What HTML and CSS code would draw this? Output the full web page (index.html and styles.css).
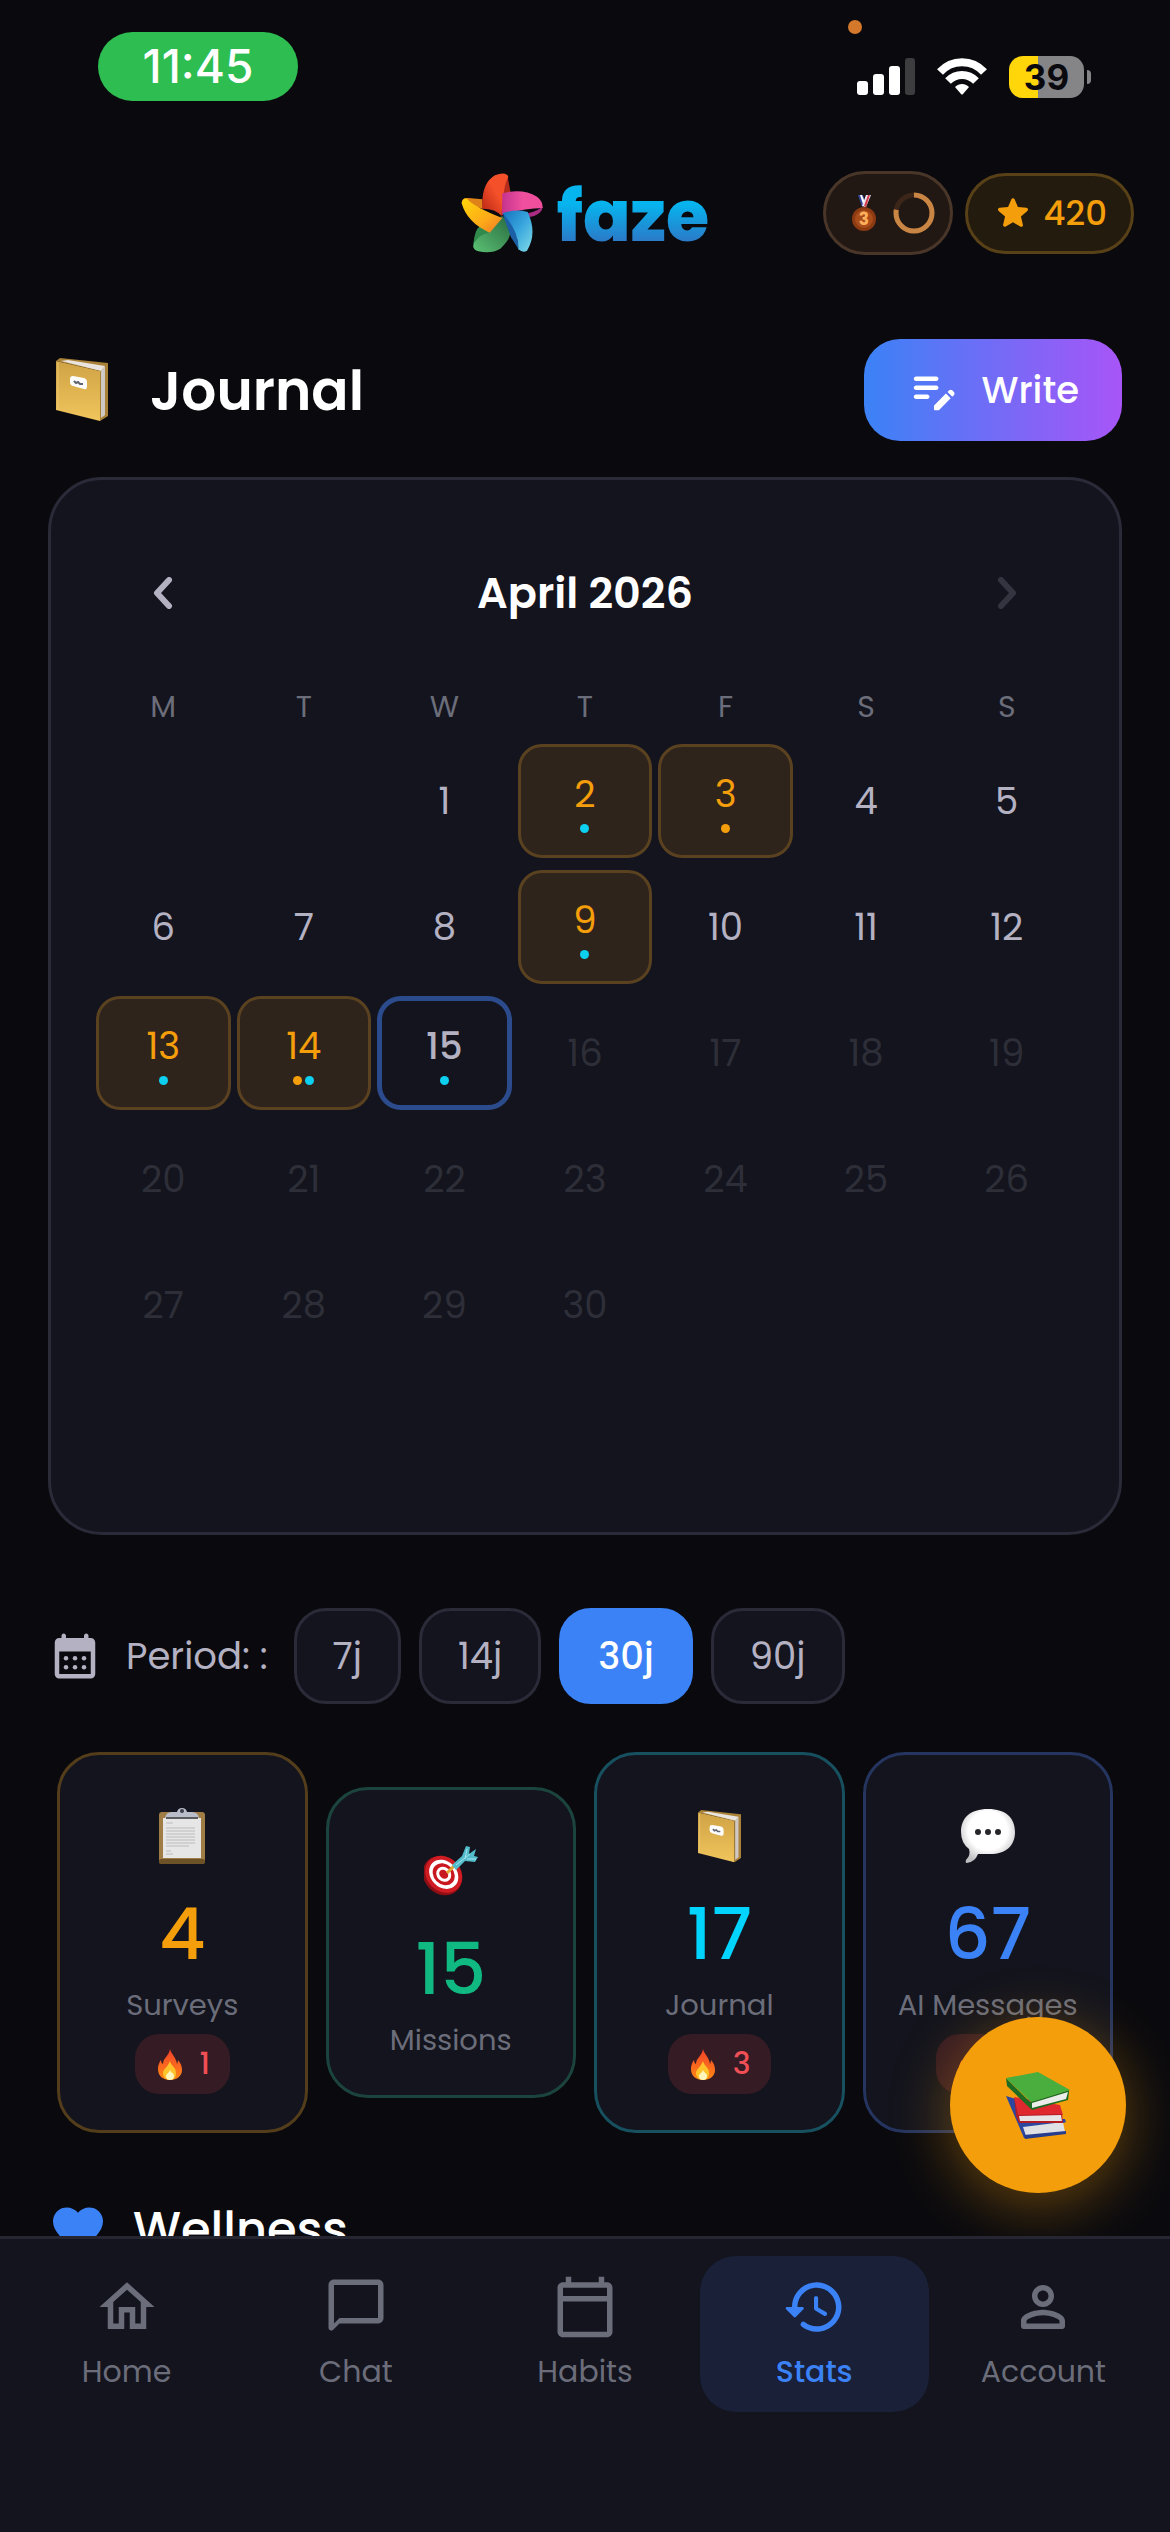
FILE: index.html
```html
<!DOCTYPE html>
<html lang="en">
<head>
    <meta charset="UTF-8">
    <meta name="viewport" content="width=device-width, initial-scale=1.0">
    <title>Faze - Stats</title>
    <link rel="stylesheet" href="styles.css">
</head>
<body>
<!-- shared emoji-style icons -->
<svg class="defs" aria-hidden="true">
    <defs>
        <linearGradient id="gold" x1="0" y1="0" x2="0" y2="1">
            <stop offset="0" stop-color="#cfa245"/>
            <stop offset="1" stop-color="#f0c55c"/>
        </linearGradient>
        <linearGradient id="flame" x1="0" y1="0" x2="0" y2="1">
            <stop offset="0" stop-color="#f2402a"/>
            <stop offset="1" stop-color="#ff8a14"/>
        </linearGradient>
        <symbol id="notebook" viewBox="0 0 52 64">
            <path d="M0 3 L4 0 L52 5 L52 58 L44 63 L44 13 Z" fill="#a98238"/>
            <path d="M5 3 L12 2 L49 8 L45 13 Z" fill="#e9e4dd"/>
            <path d="M45 13 L49 8 L49 57 L45 60 Z" fill="#cfc9c6"/>
            <path d="M0 3 L44 13 L44 63 L0 52 Z" fill="url(#gold)"/>
            <path d="M2 4 L2 52" stroke="#e9c873" stroke-width="1"/>
            <path d="M17 18 L28 20 Q31 21 31 24 L31 28 Q31 32 28 31 L17 28 Q14 27 14 24 L14 21 Q14 18 17 18 Z" fill="#fdfdfd"/>
            <path d="M18 23 L20 25 L22 24 L24 26 L27 26" stroke="#60646e" stroke-width="2" fill="none"/>
        </symbol>
        <symbol id="fire" viewBox="0 0 24 31">
            <path d="M12 0 C13 5 18 8 19 15 Q20 13 20 11 C23 14 24 18 24 21 C24 27 19 31 12 31 C5 31 0 27 0 20 C0 16 2 12 3 11 Q3 14 5 15 C5 9 11 7 12 0 Z" fill="url(#flame)"/>
            <path d="M12 12 C13 17 18 18 18 24 C18 28 16 31 12 31 C8 31 5 28 5 24 C5 20 10 18 12 12 Z" fill="#ffc32b"/>
            <path d="M12 21 C13 24 16 24 16 27 C16 30 14 31 12 31 C10 31 8 30 8 27 C8 25 11 24 12 21 Z" fill="#fff6bd"/>
        </symbol>
    </defs>
</svg>

<div class="app">
    <div class="status-bar">
        <span class="status-time">11:45</span>
        <span class="mic-dot"></span>
        <div class="status-icons">
            <svg width="58" height="38" viewBox="0 0 58 38" aria-hidden="true">
                <g fill="#fff">
                    <rect x="0" y="23" width="11" height="14" rx="3"/>
                    <rect x="16" y="16" width="11" height="21" rx="3"/>
                    <rect x="32" y="8" width="11" height="29" rx="3"/>
                </g>
                <rect x="48" y="0" width="10" height="37" rx="3" fill="#3d3d40"/>
            </svg>
            <svg width="50" height="38" viewBox="0 0 50 38" aria-hidden="true">
                <g fill="none" stroke="#fff" stroke-width="8">
                    <path d="M3 14 C15 1 35 1 47 14"/>
                    <path d="M11 23 C19 15 31 15 39 23"/>
                </g>
                <path d="M18 29 C22 25 28 25 32 29 L26 36 Q25 37 24 36 Z" fill="#fff"/>
            </svg>
            <span class="battery">39</span>
        </div>
    </div>

    <header class="top-bar">
        <a class="logo" href="#">
            <svg class="logo-mark" viewBox="66 70 246 238" aria-hidden="true">
                <defs>
                    <linearGradient id="red" x1="0" y1="1" x2="1" y2="0">
                        <stop offset="0" stop-color="#b52413"/>
                        <stop offset=".55" stop-color="#f4502a"/>
                    </linearGradient>
                    <linearGradient id="pink" x1="0" y1="0" x2="1" y2="0">
                        <stop offset="0" stop-color="#c4338f"/>
                        <stop offset=".5" stop-color="#ef4f9d"/>
                    </linearGradient>
                    <linearGradient id="sky" x1="0" y1="0" x2="1" y2="1">
                        <stop offset="0" stop-color="#1573bd"/>
                        <stop offset=".5" stop-color="#38a5de"/>
                        <stop offset="1" stop-color="#82dce8"/>
                    </linearGradient>
                    <linearGradient id="leaf" x1="1" y1="0" x2="0" y2="1">
                        <stop offset="0" stop-color="#28693f"/>
                        <stop offset="1" stop-color="#5cc274"/>
                    </linearGradient>
                    <linearGradient id="sun" x1="0" y1="0" x2="1" y2="1">
                        <stop offset="0" stop-color="#ffd60a"/>
                        <stop offset=".6" stop-color="#fdaa18"/>
                        <stop offset="1" stop-color="#f0762a"/>
                    </linearGradient>
                </defs>
                <path d="M190 198 L216 226 Q222 262 184 296 Q158 312 118 304 Q100 298 103 285 Q112 240 120 232 Z" fill="url(#leaf)"/>
                <path d="M103 282 Q108 236 122 230 L152 248 Q122 250 103 282 Z" fill="#2f8a4b"/>
                <path d="M68 160 Q68 142 88 144 L130 148 L132 176 Z" fill="#e0821a"/>
                <path d="M190 204 L152 248 Q84 218 68 160 Q70 144 84 146 Q104 170 190 204 Z" fill="url(#sun)"/>
                <path d="M190 196 L188 140 L205 74 L214 124 L192 196 Z" fill="#b62c1b"/>
                <path d="M188 198 Q170 176 130 176 Q126 100 168 76 Q200 64 208 80 Q192 106 188 198 Z" fill="url(#red)"/>
                <path d="M218 188 Q270 200 311 170 Q310 182 302 188 Q284 202 270 200 Z" fill="#a82c83"/>
                <path d="M189 194 L190 130 Q250 114 294 140 Q312 154 311 174 Q250 176 189 194 Z" fill="url(#pink)"/>
                <path d="M192 196 L216 262 L240 300 Q232 240 226 196 Z" fill="#1c5fa5"/>
                <path d="M190 190 Q230 176 266 186 Q296 250 264 302 Q252 310 238 298 Q240 240 190 190 Z" fill="url(#sky)"/>
            </svg>
            <span class="logo-name">faze</span>
        </a>
        <div class="badges">
            <button class="badge badge-rank" aria-label="Rank">
                <svg width="24" height="38" viewBox="0 0 24 38" aria-hidden="true">
                    <path d="M6 1 L11 1 L14 10 L10 13 Z" fill="#35489c"/>
                    <path d="M8 1 L10 1 L14 11 L12 13 Z" fill="#fff"/>
                    <path d="M19 1 L14 1 L10 12 L14 13 Z" fill="#e9e6f2"/>
                    <path d="M18 1 L16 1 L12 12 L14 13 Z" fill="#d63a4c"/>
                    <circle cx="12" cy="25" r="12" fill="#8b3a12"/>
                    <circle cx="12" cy="25" r="9" fill="#a84c19"/>
                    <text class="medal-num" x="12" y="31">3</text>
                </svg>
                <svg width="42" height="42" viewBox="0 0 42 42" aria-hidden="true">
                    <circle cx="21" cy="21" r="18" fill="none" stroke="#3b2619" stroke-width="5"/>
                    <circle cx="21" cy="21" r="18" fill="none" stroke="#c98544" stroke-width="5" pathLength="100" stroke-dasharray="78 22" transform="rotate(-90 21 21)"/>
                </svg>
            </button>
            <button class="badge badge-points">
                <svg width="42" height="42" viewBox="0 0 24 24" fill="currentColor" aria-hidden="true"><path d="M12 17.27l4.15 2.51c.76.46 1.69-.22 1.49-1.08l-1.1-4.72 3.67-3.18c.67-.58.31-1.68-.57-1.75l-4.83-.41-1.89-4.46c-.34-.81-1.5-.81-1.84 0L9.19 8.63l-4.83.41c-.88.07-1.24 1.17-.57 1.75l3.67 3.18-1.1 4.72c-.2.86.73 1.54 1.49 1.08l4.15-2.5z"/></svg>
                420
            </button>
        </div>
    </header>

    <div class="content">
        <main class="scroll">
            <div class="page-head">
                <svg class="page-icon" aria-hidden="true"><use href="#notebook"/></svg>
                <h1>Journal</h1>
                <button class="write-btn">
                    <svg width="54" height="54" viewBox="0 0 24 24" fill="currentColor" aria-hidden="true"><path d="M14 11c0 .55-.45 1-1 1H4c-.55 0-1-.45-1-1s.45-1 1-1h9c.55 0 1 .45 1 1zM3 7c0 .55.45 1 1 1h9c.55 0 1-.45 1-1s-.45-1-1-1H4c-.55 0-1 .45-1 1zm7 8c0-.55-.45-1-1-1H4c-.55 0-1 .45-1 1s.45 1 1 1h5c.55 0 1-.45 1-1zm8.01-2.13.71-.71c.39-.39 1.02-.39 1.41 0l.71.71c.39.39.39 1.02 0 1.41l-.71.71-2.12-2.12zm-.71.71-5.16 5.16c-.09.09-.14.21-.14.35v1.41c0 .28.22.5.5.5h1.41c.13 0 .26-.05.35-.15l5.16-5.16-2.12-2.11z"/></svg>
                    Write
                </button>
            </div>

            <section class="calendar">
                <div class="calendar-head">
                    <button class="month-btn" aria-label="Previous month">
                        <svg width="20" height="32" viewBox="0 0 20 32" aria-hidden="true"><path d="M16 3 L4 16 L16 29"/></svg>
                    </button>
                    <h2>April 2026</h2>
                    <button class="month-btn" aria-label="Next month" disabled>
                        <svg width="20" height="32" viewBox="0 0 20 32" aria-hidden="true"><path d="M4 3 L16 16 L4 29"/></svg>
                    </button>
                </div>
                <table class="days">
                    <thead>
                    <tr><th>M</th><th>T</th><th>W</th><th>T</th><th>F</th><th>S</th><th>S</th></tr>
                    </thead>
                    <tbody>
                    <tr>
                        <td></td>
                        <td></td>
                        <td><button class="day">1</button></td>
                        <td><button class="day filled">2<span class="dots"><i class="dot cyan"></i></span></button></td>
                        <td><button class="day filled">3<span class="dots"><i class="dot orange"></i></span></button></td>
                        <td><button class="day">4</button></td>
                        <td><button class="day">5</button></td>
                    </tr>
                    <tr>
                        <td><button class="day">6</button></td>
                        <td><button class="day">7</button></td>
                        <td><button class="day">8</button></td>
                        <td><button class="day filled">9<span class="dots"><i class="dot cyan"></i></span></button></td>
                        <td><button class="day">10</button></td>
                        <td><button class="day">11</button></td>
                        <td><button class="day">12</button></td>
                    </tr>
                    <tr>
                        <td><button class="day filled">13<span class="dots"><i class="dot cyan"></i></span></button></td>
                        <td><button class="day filled">14<span class="dots"><i class="dot orange"></i><i class="dot cyan"></i></span></button></td>
                        <td><button class="day today">15<span class="dots"><i class="dot cyan"></i></span></button></td>
                        <td><button class="day" disabled>16</button></td>
                        <td><button class="day" disabled>17</button></td>
                        <td><button class="day" disabled>18</button></td>
                        <td><button class="day" disabled>19</button></td>
                    </tr>
                    <tr>
                        <td><button class="day" disabled>20</button></td>
                        <td><button class="day" disabled>21</button></td>
                        <td><button class="day" disabled>22</button></td>
                        <td><button class="day" disabled>23</button></td>
                        <td><button class="day" disabled>24</button></td>
                        <td><button class="day" disabled>25</button></td>
                        <td><button class="day" disabled>26</button></td>
                    </tr>
                    <tr>
                        <td><button class="day" disabled>27</button></td>
                        <td><button class="day" disabled>28</button></td>
                        <td><button class="day" disabled>29</button></td>
                        <td><button class="day" disabled>30</button></td>
                        <td></td>
                        <td></td>
                        <td></td>
                    </tr>
                    <tr><td colspan="7"></td></tr>
                    </tbody>
                </table>
            </section>

            <div class="period" role="group" aria-labelledby="periodLabel">
                <svg width="54" height="54" viewBox="0 0 24 24" fill="currentColor" aria-hidden="true">
                    <path fill-rule="evenodd" d="M7 2c.55 0 1 .45 1 1v1h8V3c0-.55.45-1 1-1s1 .45 1 1v1h1c1.1 0 2 .9 2 2v14c0 1.1-.9 2-2 2H5c-1.1 0-2-.9-2-2V6c0-1.1.9-2 2-2h1V3c0-.55.45-1 1-1zM5 10v10h14V10z"/>
                    <circle cx="8" cy="13" r="1"/><circle cx="12" cy="13" r="1"/><circle cx="16" cy="13" r="1"/>
                    <circle cx="8" cy="17" r="1"/><circle cx="12" cy="17" r="1"/><circle cx="16" cy="17" r="1"/>
                </svg>
                <span id="periodLabel" class="period-label">Period: :</span>
                <div class="period-options">
                    <button class="chip">7j</button>
                    <button class="chip">14j</button>
                    <button class="chip active" aria-pressed="true">30j</button>
                    <button class="chip">90j</button>
                </div>
            </div>

            <section class="stats">
                <div class="stat stat-orange">
                    <div class="stat-icon">
                        <svg width="46" height="56" viewBox="0 0 46 56" aria-hidden="true">
                            <rect x="0" y="4" width="46" height="52" rx="3" fill="#a07d45"/>
                            <rect x="0" y="51" width="46" height="5" rx="2" fill="#6d5127"/>
                            <path d="M4 10 H42 V50 H4 Z" fill="#e6e6e6"/>
                            <path d="M6 10 Q7 4 13 4 L18 4 Q19 0 23 0 Q27 0 28 4 L33 4 Q39 4 40 10 Z" fill="#b9bcc9"/>
                            <circle cx="23" cy="3" r="2" fill="#3c3d4a"/>
                            <path d="M7 10 H39" stroke="#5d5d60" stroke-width="2"/>
                            <path d="M7 15 H14 M7 20 H36 M7 23 H36 M7 26 H36 M7 29 H36 M7 32 H36 M7 35 H36 M7 38 H30 M7 43 H12 M7 46 H14" stroke="#bcbcbe" stroke-width="1"/>
                        </svg>
                    </div>
                    <div class="stat-value">4</div>
                    <div class="stat-label">Surveys</div>
                    <div class="streak"><svg aria-hidden="true"><use href="#fire"/></svg>1</div>
                </div>
                <div class="stat stat-green">
                    <div class="stat-icon">
                        <svg width="54" height="50" viewBox="0 0 54 50" aria-hidden="true">
                            <g transform="rotate(45 19 29)">
                                <ellipse cx="19" cy="30" rx="21" ry="18" fill="#8f0d14"/>
                                <ellipse cx="19" cy="28" rx="20" ry="17" fill="#cf1c22"/>
                                <ellipse cx="19" cy="28" rx="16" ry="13" fill="#fff"/>
                                <ellipse cx="19" cy="28" rx="12" ry="10" fill="#c9181f"/>
                                <ellipse cx="19" cy="28" rx="8" ry="7" fill="#fff"/>
                                <ellipse cx="19" cy="28" rx="5" ry="4" fill="#c9181f"/>
                            </g>
                            <path d="M23 27 L30 20" stroke="#e2a533" stroke-width="3"/>
                            <path d="M28 19 L38 10 L42 0 L46 1 L45 8 L52 3 L50 10 L54 11 L51 16 L41 15 L32 24 Z" fill="#52bccb"/>
                            <path d="M32 19 L46 8 M41 13 L43 3 M43 13 L52 13" stroke="#a5e6ee" stroke-width="1"/>
                        </svg>
                    </div>
                    <div class="stat-value">15</div>
                    <div class="stat-label">Missions</div>
                </div>
                <div class="stat stat-cyan">
                    <div class="stat-icon">
                        <svg width="43" height="53" aria-hidden="true"><use href="#notebook"/></svg>
                    </div>
                    <div class="stat-value">17</div>
                    <div class="stat-label">Journal</div>
                    <div class="streak"><svg aria-hidden="true"><use href="#fire"/></svg>3</div>
                </div>
                <div class="stat stat-blue">
                    <div class="stat-icon">
                        <svg width="54" height="54" viewBox="0 0 54 54" aria-hidden="true">
                            <defs>
                                <radialGradient id="bubble" cx=".5" cy=".4" r=".6">
                                    <stop offset=".6" stop-color="#fff"/>
                                    <stop offset="1" stop-color="#bfbfc2"/>
                                </radialGradient>
                            </defs>
                            <path d="M27 0 C45 0 54 9 54 23 C54 37 45 45 29 45 Q20 45 17 45 Q14 53 6 54 Q4 54 5 51 Q10 46 8 40 Q0 34 0 23 C0 9 9 0 27 0 Z" fill="url(#bubble)"/>
                            <g fill="#26262b"><circle cx="17" cy="23" r="3"/><circle cx="27" cy="23" r="3"/><circle cx="37" cy="23" r="3"/></g>
                        </svg>
                    </div>
                    <div class="stat-value">67</div>
                    <div class="stat-label">AI Messages</div>
                    <div class="streak"><svg aria-hidden="true"><use href="#fire"/></svg>3</div>
                </div>
            </section>

            <h2 class="section-title">
                <svg width="60" height="60" viewBox="0 0 24 24" aria-hidden="true"><path fill="#3b82f6" d="M13.35 20.13c-.76.69-1.93.69-2.69-.01l-.11-.1C5.3 15.27 1.87 12.16 2 8.28c.06-1.7.93-3.33 2.34-4.29 2.64-1.8 5.9-.96 7.66 1.1 1.76-2.06 5.02-2.91 7.66-1.1 1.41.96 2.28 2.59 2.34 4.29.14 3.88-3.3 6.99-8.55 11.76l-.1.09z"/></svg>
                Wellness
            </h2>
        </main>

        <button class="fab" aria-label="Library">
            <svg width="64" height="67" viewBox="0 0 64 67" aria-hidden="true">
                <path d="M0 24 L10 27 L14 47 L59 47 L60 50 L20 66 L18 66 Z" fill="#2b479f"/>
                <path d="M17 55 L57 50 L59 60 L20 64 Z" fill="#dfe0e3"/>
                <path d="M18 63 L60 59 L60 62 L19 67 Z" fill="#253d8c"/>
                <path d="M8 25 L54 33 L57 43 L12 44 Z" fill="#e0292f"/>
                <path d="M8 25 L12 43 L56 42 L57 51 L13 51 L10 44 Z" fill="#b31c24"/>
                <path d="M13 44 L55 43 L56 49 L14 49 Z" fill="#e8e5e6"/>
                <path d="M0 6 L24 30 L63 18 L63 20 L62 28 L26 38 L1 14 Z" fill="#1e6b22"/>
                <path d="M26 31 L62 20 L60 27 L26 36 Z" fill="#ececea"/>
                <path d="M0 6 L32 0 L64 18 L25 30 Z" fill="#4aae3f"/>
            </svg>
        </button>
    </div>

    <nav class="tab-bar">
        <a class="tab" href="#">
            <svg viewBox="0 0 24 24" aria-hidden="true"><path d="M12 5.69l5 4.5V18h-2v-6H9v6H7v-7.81l5-4.5M12 3L2 12h3v8h6v-6h2v6h6v-8h3L12 3z"/></svg>
            Home
        </a>
        <a class="tab" href="#">
            <svg viewBox="0 0 24 24" aria-hidden="true"><path d="M20 2H4c-1.1 0-2 .9-2 2v15.59c0 .89 1.08 1.34 1.71.71L6 18h14c1.1 0 2-.9 2-2V4c0-1.1-.9-2-2-2zm0 14H6l-2 2V4h16v12z"/></svg>
            Chat
        </a>
        <a class="tab" href="#">
            <svg viewBox="0 0 24 24" aria-hidden="true"><path d="M20 3h-1V1h-2v2H7V1H5v2H4c-1.1 0-2 .9-2 2v16c0 1.1.9 2 2 2h16c1.1 0 2-.9 2-2V5c0-1.1-.9-2-2-2zm0 18H4V10h16v11zm0-13H4V5h16v3z"/></svg>
            Habits
        </a>
        <a class="tab active" href="#" aria-current="page">
            <svg viewBox="0 0 24 24" aria-hidden="true"><path d="M13.26 3C8.17 2.86 4 6.95 4 12H2.21c-.45 0-.67.54-.35.85l2.79 2.8c.2.2.51.2.71 0l2.79-2.8c.31-.31.09-.85-.36-.85H6c0-3.9 3.18-7.05 7.1-7 3.72.05 6.85 3.18 6.9 6.9.05 3.91-3.1 7.1-7 7.1-1.61 0-3.1-.55-4.28-1.48-.4-.31-.96-.28-1.32.08-.42.43-.39 1.13.08 1.49C9 20.29 10.91 21 13 21c5.05 0 9.14-4.17 9-9.26-.13-4.69-4.05-8.61-8.74-8.74zm-.51 5c-.41 0-.75.34-.75.75v3.68c0 .35.19.68.49.86l3.12 1.85c.36.21.82.09 1.03-.26.21-.36.09-.82-.26-1.03l-2.88-1.71v-3.4c0-.4-.34-.74-.75-.74z"/></svg>
            Stats
        </a>
        <a class="tab" href="#">
            <svg viewBox="0 0 24 24" aria-hidden="true"><path d="M12 6c1.1 0 2 .9 2 2s-.9 2-2 2-2-.9-2-2 .9-2 2-2m0 9c2.7 0 5.8 1.29 6 2v1H6v-.99c.2-.72 3.3-2.01 6-2.01m0-11C9.79 4 8 5.79 8 8s1.79 4 4 4 4-1.79 4-4-1.79-4-4-4zm0 9c-2.67 0-8 1.34-8 4v2c0 .55.45 1 1 1h14c.55 0 1-.45 1-1v-2c0-2.66-5.33-4-8-4z"/></svg>
            Account
        </a>
    </nav>
</div>
</body>
</html>
```

FILE: styles.css
```css
* {
    box-sizing: border-box;
}

body {
    margin: 0;
    background-color: #0a0a0e;
    color: #fff;
    font-family: Poppins, Inter, "Liberation Sans", sans-serif;
    font-size: 37px;
}

h1, h2 {
    margin: 0;
}

button {
    margin: 0;
    padding: 0;
    border: none;
    background: none;
    color: inherit;
    font: inherit;
    cursor: pointer;
}

a {
    color: inherit;
    text-decoration: none;
}

svg {
    display: block;
    flex-shrink: 0;
}

.defs {
    position: absolute;
    width: 0;
    height: 0;
}

.app {
    display: flex;
    flex-direction: column;
    height: 100vh;
}

/* status bar */
.status-bar {
    position: relative;
    display: flex;
    justify-content: space-between;
    align-items: flex-start;
    height: 132px;
    padding: 32px 78px 0 98px;
    font-family: Inter, "Liberation Sans", sans-serif;
}

.status-time {
    width: 200px;
    border-radius: 36px;
    background-color: #2ebd51;
    font-size: 46px;
    font-weight: 500;
    line-height: 69px;
    text-align: center;
}

.mic-dot {
    position: absolute;
    top: 20px;
    right: 308px;
    width: 14px;
    height: 14px;
    border-radius: 50%;
    background-color: #d4782c;
}

.status-icons {
    display: flex;
    align-items: center;
    gap: 22px;
    padding-top: 24px;
}

.battery {
    position: relative;
    width: 75px;
    margin-right: 8px;
    border-radius: 14px;
    background: linear-gradient(to right, #ffd60a 39%, #858588 39%);
    color: #0a0a0e;
    font-size: 35px;
    font-weight: 700;
    line-height: 42px;
    text-align: center;
}

.battery::after {
    content: "";
    position: absolute;
    top: 14px;
    right: -7px;
    width: 4px;
    height: 14px;
    border-radius: 0 4px 4px 0;
    background-color: #858588;
}

/* header */
.top-bar {
    display: grid;
    grid-template-columns: 1fr auto 1fr;
    align-items: center;
    height: 162px;
    padding: 0 36px;
}

.logo {
    display: flex;
    grid-column: 2;
    align-items: center;
    gap: 14px;
}

.logo-mark {
    width: 82px;
    height: 80px;
}

.logo-name {
    padding-top: 8px;
    background: linear-gradient(#06b4ee 40%, #2f74c4 85%);
    background-clip: text;
    -webkit-background-clip: text;
    color: transparent;
    font-size: 70px;
    font-weight: 800;
    line-height: 84px;
}

.badges {
    display: flex;
    align-items: center;
    justify-content: flex-end;
    gap: 12px;
}

.badge {
    display: flex;
    align-items: center;
    height: 84px;
    border: 3px solid;
    border-radius: 42px;
}

.badge-rank {
    gap: 17px;
    padding: 0 15px 0 26px;
    border-color: #493629;
    background-color: #211814;
}

.medal-num {
    fill: #ffb05c;
    font-size: 17px;
    font-weight: 700;
    text-anchor: middle;
}

.badge-points {
    gap: 10px;
    height: 81px;
    padding: 0 24px;
    border-color: #594117;
    background-color: #241b0f;
    color: #f59e0b;
    font-size: 34px;
    font-weight: 500;
}

/* scrolling content */
.content {
    position: relative;
    flex: 1;
    min-height: 0;
    overflow: hidden;
}

.scroll {
    height: 100%;
    padding: 45px 48px 0;
    overflow-y: auto;
    scrollbar-width: none;
}

.page-head {
    display: flex;
    align-items: center;
    margin-bottom: 36px;
    padding-left: 8px;
}

.page-icon {
    width: 52px;
    height: 64px;
}

.page-head h1 {
    margin-left: 42px;
    font-size: 55px;
    font-weight: 600;
}

.write-btn {
    display: flex;
    align-items: center;
    gap: 20px;
    height: 102px;
    margin-left: auto;
    padding: 0 43px;
    border-radius: 36px;
    background: linear-gradient(to right, #3b82f6, #a855f7);
    font-weight: 500;
}

/* calendar */
.calendar {
    padding: 42px 42px 38px;
    border: 3px solid #2a2a38;
    border-radius: 54px;
    background-color: #13141d;
}

.calendar-head {
    display: flex;
    justify-content: space-between;
    align-items: center;
    margin-bottom: 12px;
}

.calendar-head h2 {
    font-size: 43px;
    font-weight: 600;
}

.month-btn {
    display: flex;
    justify-content: center;
    align-items: center;
    width: 140px;
    height: 142px;
}

.month-btn path {
    fill: none;
    stroke: #b4b1c2;
    stroke-width: 6;
    stroke-linecap: round;
    stroke-linejoin: round;
}

.month-btn:disabled path {
    stroke: #33343f;
}

.days {
    width: 100%;
    table-layout: fixed;
    border-spacing: 0;
}

.days th {
    height: 62px;
    padding: 0;
    color: #6b6d7a;
    font-size: 30px;
    font-weight: 400;
}

.days td {
    height: 126px;
    padding: 6px 3px;
}

.day {
    display: flex;
    flex-direction: column;
    justify-content: center;
    align-items: center;
    width: 100%;
    height: 114px;
    border: 3px solid transparent;
    border-radius: 24px;
    color: #b4b1c2;
    font-weight: 400;
    line-height: 44px;
}

.day:disabled {
    color: #2d2e38;
}

.day.filled {
    padding-top: 3px;
    border-color: #5a4220;
    background-color: #2f241c;
    color: #f59e0b;
}

.day.today {
    padding-top: 3px;
    border: 5px solid #2b4b8c;
    font-weight: 500;
}

.dots {
    display: flex;
    gap: 3px;
    margin-top: 8px;
}

.dot {
    width: 9px;
    height: 9px;
    border-radius: 50%;
}

.cyan {
    background-color: #0dcff0;
}

.orange {
    background-color: #f59e0b;
}

/* period filter */
.period {
    display: flex;
    align-items: center;
    margin-top: 73px;
    color: #b4b1c2;
}

.period-label {
    margin: 0 26px 0 24px;
}

.period-options {
    display: flex;
    gap: 18px;
}

.chip {
    height: 96px;
    padding: 0 36px;
    border: 3px solid #2a2a38;
    border-radius: 32px;
    background-color: #13141d;
}

.chip.active {
    border-color: #3b82f6;
    background-color: #3b82f6;
    color: #fff;
    font-weight: 500;
}

/* stat cards */
.stats {
    display: grid;
    grid-template-columns: repeat(4, 1fr);
    align-items: center;
    gap: 18px;
    margin: 48px 9px 0;
}

.stat {
    display: flex;
    flex-direction: column;
    align-items: center;
    padding: 36px 0;
    border: 3px solid;
    border-radius: 42px;
    background-color: #13141d;
}

.stat-icon {
    display: flex;
    align-items: center;
    height: 90px;
}

.stat-value {
    font-size: 72px;
    font-weight: 500;
    line-height: 105px;
}

.stat-label {
    color: #6b6d7a;
    font-size: 29px;
    line-height: 38px;
    white-space: nowrap;
}

.stat-orange {
    border-color: #533d1b;
    color: #f59e0b;
}

.stat-green {
    border-color: #1c443f;
    color: #10b981;
}

.stat-cyan {
    border-color: #17505f;
    color: #00d4ff;
}

.stat-blue {
    border-color: #253560;
    color: #3b82f6;
}

.streak {
    display: flex;
    align-items: center;
    gap: 18px;
    margin-top: 10px;
    padding: 0 20px 0 23px;
    border-radius: 24px;
    background-color: #351b23;
    color: #ef4f55;
    font-size: 30px;
    font-weight: 500;
    line-height: 60px;
}

.streak svg {
    width: 24px;
    height: 31px;
}

.section-title {
    display: flex;
    align-items: center;
    gap: 25px;
    margin-top: 65px;
    font-size: 48px;
    font-weight: 500;
    line-height: 64px;
}

.fab {
    position: absolute;
    right: 44px;
    bottom: 43px;
    display: flex;
    justify-content: center;
    align-items: center;
    width: 176px;
    height: 176px;
    border-radius: 50%;
    background-color: #f59e0b;
    box-shadow: 0 12px 60px rgba(245, 158, 11, 0.4);
}

/* bottom navigation */
.tab-bar {
    display: flex;
    align-items: flex-start;
    height: 296px;
    padding: 17px 12px 0;
    border-top: 3px solid #262633;
    background-color: #13141d;
}

.tab {
    display: flex;
    flex: 1;
    flex-direction: column;
    align-items: center;
    height: 156px;
    padding-top: 18px;
    border-radius: 36px;
    color: #6b6d7a;
    font-size: 30px;
    line-height: 64px;
}

.tab svg {
    width: 66px;
    height: 66px;
    fill: currentColor;
}

.tab.active {
    background-color: #192038;
    color: #3b82f6;
    font-weight: 500;
}
```
